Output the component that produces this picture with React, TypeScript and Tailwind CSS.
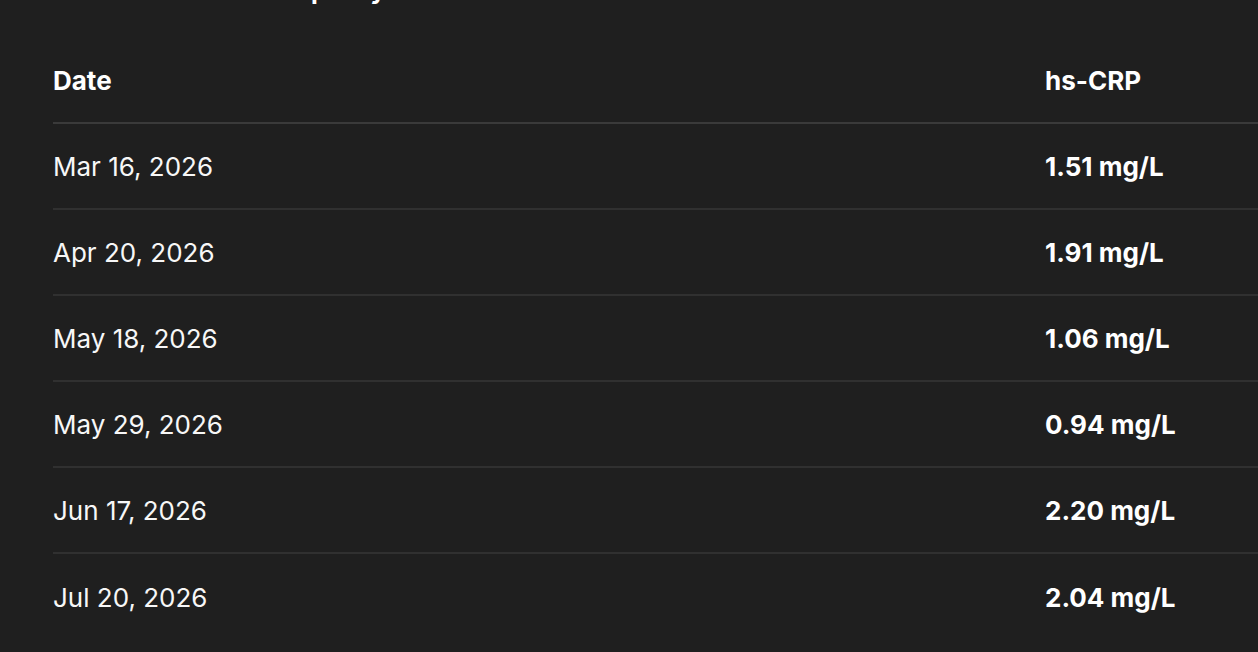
const rows = [
  { date: 'Mar 16, 2026', value: '1.51 mg/L' },
  { date: 'Apr 20, 2026', value: '1.91 mg/L' },
  { date: 'May 18, 2026', value: '1.06 mg/L' },
  { date: 'May 29, 2026', value: '0.94 mg/L' },
  { date: 'Jun 17, 2026', value: '2.20 mg/L' },
  { date: 'Jul 20, 2026', value: '2.04 mg/L' },
];

const App = () => {
  return (
    <div className="h-screen overflow-hidden bg-[#1f1f1f] pl-[53px] text-white font-['Inter',sans-serif]">
      <h2 className="-mt-[27px] text-[25px] leading-[34px] font-bold whitespace-nowrap">
        Test results from the past year
      </h2>
      <div className="mt-[31px]">
        <div className="grid grid-cols-[992px_1fr] h-[86px] items-center border-b-2 border-[#3a3a3a]">
          <div className="text-[26px] font-bold">Date</div>
          <div className="text-[26px] font-bold">hs-CRP</div>
        </div>
        {rows.map((row, i) => (
          <div
            key={row.date}
            className={
              i < rows.length - 1
                ? 'grid grid-cols-[992px_1fr] h-[86px] items-center border-b-2 border-[#303030]'
                : 'grid grid-cols-[992px_1fr] h-[86px] items-center'
            }
          >
            <div className="text-[26px] text-[#f7f7f7]">{row.date}</div>
            <div className="text-[26px] font-bold">{row.value}</div>
          </div>
        ))}
      </div>
    </div>
  );
};

export default App;
